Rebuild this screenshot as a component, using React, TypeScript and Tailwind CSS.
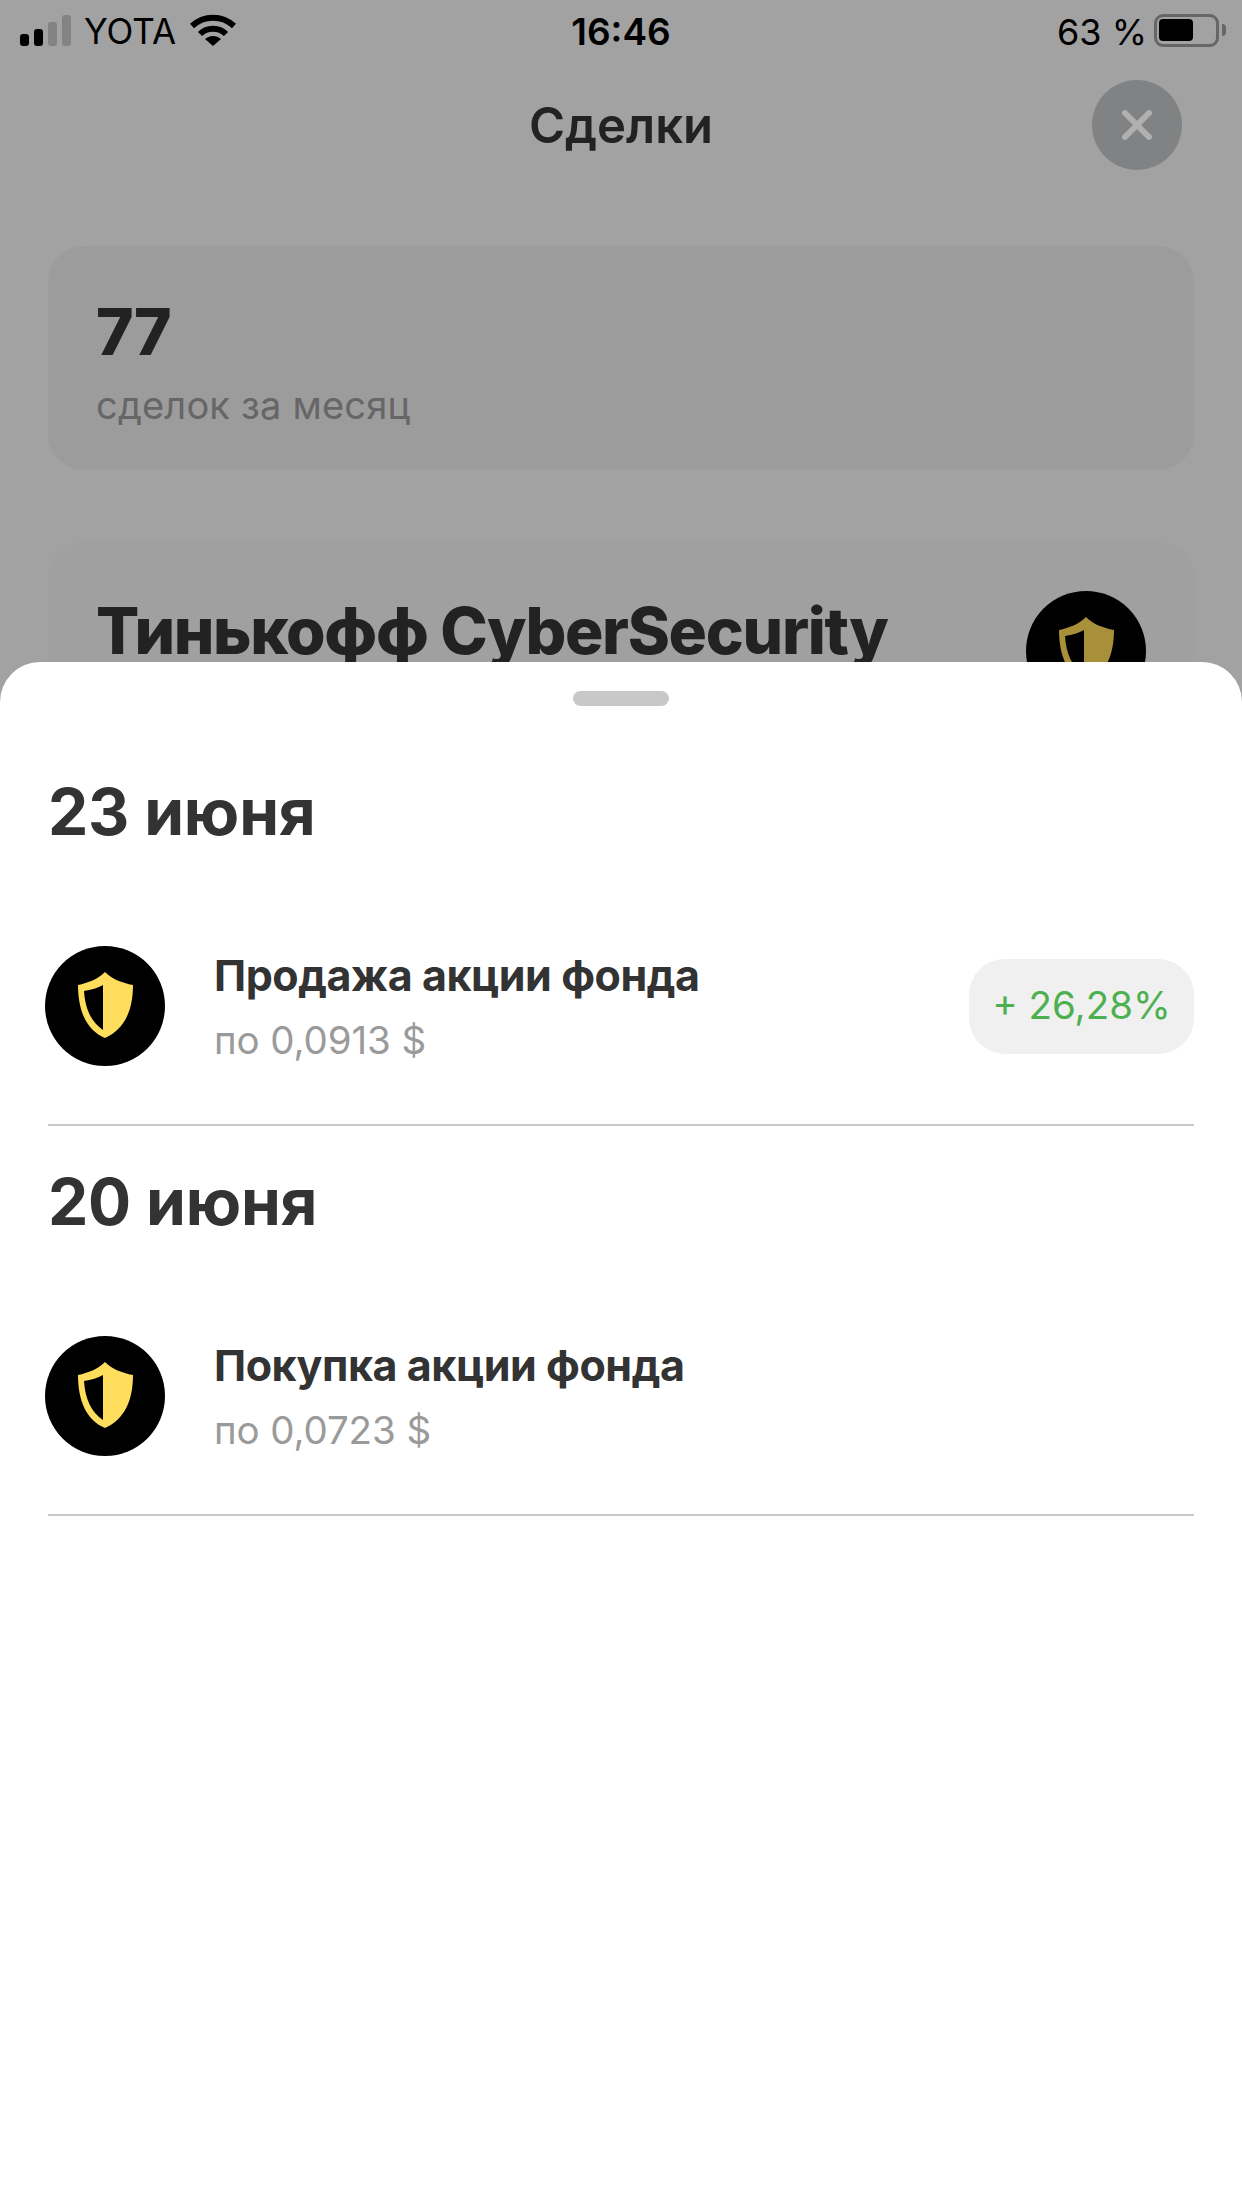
const FONT = 'font-["Inter","Noto_Sans",sans-serif]'

function Shield({ color }: { color: string }) {
    return (
        <svg viewBox="0 0 120 120" className="h-[120px] w-[120px] shrink-0">
            <circle cx="60" cy="60" r="60" fill="#000" />
            <path d="M60 26 C67 33 77 37 88 39 C88 64 80 83 60 92 C41 84 33 64 33 39 C43 37 53 33 60 26 Z" fill={color} />
            <path d="M58 39 C53 42 46 44 39 45 C40 62 46 76 58 84 Z" fill="#000" />
        </svg>
    )
}

function StatusBar() {
    return (
        <div className="grid h-[60px] grid-cols-3 items-center pl-5 pr-4 text-[35px] leading-none text-black">
            <div className="flex items-center">
                <div className="flex h-[31px] items-end gap-[5px]">
                    <span className="h-[12px] w-[9px] rounded-[3px] bg-black" />
                    <span className="h-[17px] w-[9px] rounded-[3px] bg-black" />
                    <span className="h-[24px] w-[9px] rounded-[3px] bg-[#838383]" />
                    <span className="h-[31px] w-[9px] rounded-[3px] bg-[#838383]" />
                </div>
                <span className="ml-[13px] pt-[3px] font-normal">YOTA</span>
                <svg viewBox="0 0 46 33" className="ml-[14px] h-[33px] w-[46px]" fill="none" stroke="#000" strokeWidth="6">
                    <path d="M2 12 C14 1 32 1 44 12" />
                    <path d="M10 20 C17 13 29 13 36 20" />
                    <path d="M23 32 L15 25 C20 21 26 21 31 25 Z" fill="#000" stroke="none" />
                </svg>
            </div>
            <div className="pr-[4px] pt-[2px] text-center text-[37px] font-semibold">16:46</div>
            <div className="flex items-center justify-end">
                <span className="pt-[3px] text-[36px]">63 %</span>
                <div className="ml-[7px] flex h-[33px] w-[65px] items-center rounded-[9px] border-[3px] border-[#666] pl-[2px]">
                    <span className="h-[22px] w-[34px] rounded-[4px] bg-black" />
                </div>
                <span className="ml-[3px] h-[12px] w-[4px] rounded-r-full bg-[#666]" />
            </div>
        </div>
    )
}

function Backdrop() {
    return (
        <div className="h-[702px] overflow-hidden bg-[#a2a2a2]">
            <StatusBar />
            <div className="relative flex h-[130px] items-center justify-center">
                <span className="pt-[2px] text-[49px] font-semibold text-[#222]">Сделки</span>
                <div className="absolute right-[60px] top-[20px] flex h-[90px] w-[90px] items-center justify-center rounded-full bg-[#808283]">
                    <svg viewBox="0 0 30 30" className="h-[30px] w-[30px]" stroke="#b0b0b0" strokeWidth="6" strokeLinecap="round">
                        <path d="M3 3 L27 27 M27 3 L3 27" />
                    </svg>
                </div>
            </div>
            <div className="mx-12 mt-[56px] h-[224px] rounded-[36px] bg-[#9c9c9c] pl-12 pt-[47px]">
                <div className="text-[64px] font-extrabold leading-[78px] tracking-[-1px] text-[#222]">77</div>
                <div className="mt-[9px] text-[38px] leading-[50px] tracking-[0.2px] text-[#666]">сделок за месяц</div>
            </div>
            <div className="mx-12 mt-[72px] flex h-[300px] items-start justify-between rounded-[36px] bg-[#a0a0a0] pl-12 pr-12 pt-[49px]">
                <span className="pt-[1px] text-[64px] font-extrabold leading-[78px] tracking-[-1.3px] text-[#222]">Тинькофф CyberSecurity</span>
                <Shield color="#a8903a" />
            </div>
        </div>
    )
}

function Deal({ date, title, price, badge }: { date: string; title: string; price: string; badge?: string }) {
    return (
        <div className="mx-12 border-b-2 border-[#c8c8c8]">
            <div className="text-[64px] font-bold leading-[78px] tracking-[-0.2px] text-[#333]">{date}</div>
            <div className="mt-[95px] flex items-center pb-[58px]">
                <div className="-ml-[3px]">
                    <Shield color="#fede5c" />
                </div>
                <div className="ml-[49px] flex-1 pt-[3px]">
                    <div className="text-[43px] font-bold leading-[50px] tracking-[-0.45px] text-[#333]">{title}</div>
                    <div className="mt-[15px] text-[38.5px] leading-[50px] tracking-[-0.1px] text-[#9a9a9a]">{price}</div>
                </div>
                {badge && (
                    <div className="flex h-[95px] w-[225px] items-center justify-center rounded-[36px] bg-[#f0f0f0] text-[38.5px] text-[#4cb050]">
                        {badge}
                    </div>
                )}
            </div>
        </div>
    )
}

export default function App() {
    return (
        <div className={`h-[2208px] w-[1242px] overflow-hidden bg-white ${FONT}`}>
            <Backdrop />
            <div className="relative -mt-[40px] h-[1546px] rounded-t-[40px] bg-white">
                <div className="flex justify-center pt-[29px]">
                    <span className="h-[15px] w-[96px] rounded-full bg-[#c8c8c8]" />
                </div>
                <div className="mt-[67px] flex flex-col gap-[37px]">
                    <Deal date="23 июня" title="Продажа акции фонда" price="по 0,0913 $" badge="+ 26,28%" />
                    <Deal date="20 июня" title="Покупка акции фонда" price="по 0,0723 $" />
                </div>
            </div>
        </div>
    )
}
